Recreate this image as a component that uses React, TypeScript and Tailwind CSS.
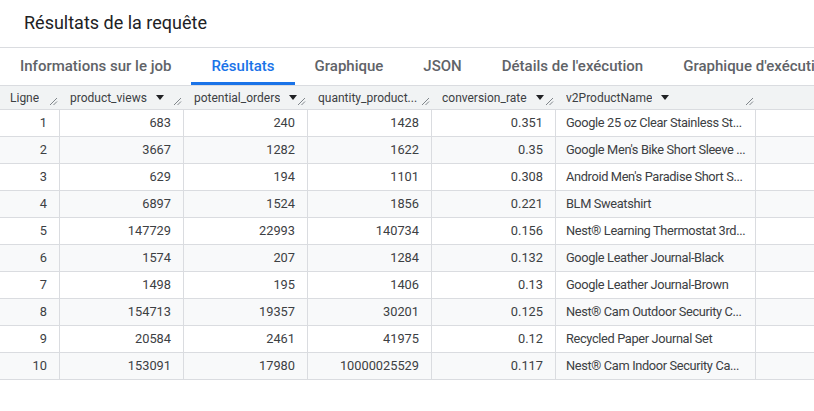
import React from "react";

interface Row {
  views: number;
  orders: number;
  qty: number;
  rate: string;
  name: string;
}

const rows: Row[] = [
  { views: 683, orders: 240, qty: 1428, rate: "0.351", name: "Google 25 oz Clear Stainless St..." },
  { views: 3667, orders: 1282, qty: 1622, rate: "0.35", name: "Google Men's Bike Short Sleeve ..." },
  { views: 629, orders: 194, qty: 1101, rate: "0.308", name: "Android Men's Paradise Short S..." },
  { views: 6897, orders: 1524, qty: 1856, rate: "0.221", name: "BLM Sweatshirt" },
  { views: 147729, orders: 22993, qty: 140734, rate: "0.156", name: "Nest® Learning Thermostat 3rd..." },
  { views: 1574, orders: 207, qty: 1284, rate: "0.132", name: "Google Leather Journal-Black" },
  { views: 1498, orders: 195, qty: 1406, rate: "0.13", name: "Google Leather Journal-Brown" },
  { views: 154713, orders: 19357, qty: 30201, rate: "0.125", name: "Nest® Cam Outdoor Security C..." },
  { views: 20584, orders: 2461, qty: 41975, rate: "0.12", name: "Recycled Paper Journal Set" },
  { views: 153091, orders: 17980, qty: 10000025529, rate: "0.117", name: "Nest® Cam Indoor Security Ca..." },
];

const tabs = [
  "Informations sur le job",
  "Résultats",
  "Graphique",
  "JSON",
  "Détails de l'exécution",
  "Graphique d'exécution",
];

// little "//" resize grip at the bottom right of header cells
function Grip() {
  return (
    <svg width="9" height="9" viewBox="0 0 9 9" className="absolute right-[2px] bottom-[3px]">
      <line x1="1" y1="8" x2="8" y2="1" stroke="#80868b" strokeWidth="1" />
      <line x1="4.5" y1="8" x2="8" y2="4.5" stroke="#80868b" strokeWidth="1" />
    </svg>
  );
}

function SortArrow() {
  return (
    <svg width="8" height="5" viewBox="0 0 8 5" className="ml-[9px] shrink-0">
      <path d="M0 0h8L4 5z" fill="#202124" />
    </svg>
  );
}

function HeaderCell({ label, width, sort }: { label: string; width: string; sort?: boolean }) {
  return (
    <div className={`relative flex items-center h-full pl-[10px] pr-[8px] whitespace-nowrap ${width}`}>
      <span className="overflow-hidden">{label}</span>
      {sort && <SortArrow />}
      <Grip />
    </div>
  );
}

export default function App() {
  return (
    <div className="w-[814px] h-[411px] overflow-hidden bg-white" style={{ fontFamily: "Roboto, 'Liberation Sans', sans-serif" }}>
      <div className="h-[48px] flex items-center pl-[24px] pb-[2px] text-[18px] text-[#202124] border-b border-[#dadce0]">
        Résultats de la requête
      </div>

      <div className="flex h-[37px] whitespace-nowrap text-[15px] font-medium">
        {tabs.map((t, i) => (
          <div
            key={t}
            className={`flex items-center px-[20px] pt-[2px] border-b-[3px] ${
              i === 1 ? "text-[#1a73e8] border-[#1a73e8]" : "text-[#5f6368] border-transparent"
            }`}
          >
            {t}
          </div>
        ))}
      </div>

      <div className="text-[12.8px] text-[#3c4043]">
        <div className="flex h-[25px] bg-[#f1f3f4] border-y border-[#dadce0] text-[12px] text-[#3c4043]">
          <HeaderCell label="Ligne" width="w-[60px]" />
          <HeaderCell label="product_views" width="w-[124px]" sort />
          <HeaderCell label="potential_orders" width="w-[124px]" sort />
          <HeaderCell label="quantity_product..." width="w-[124px]" />
          <HeaderCell label="conversion_rate" width="w-[124px]" sort />
          <HeaderCell label="v2ProductName" width="w-[200px]" sort />
        </div>

        {rows.map((r, i) => (
          <div
            key={i}
            className={`flex h-[27px] border-b border-[#dadce0] ${i % 2 === 1 ? "bg-[#f8f9fa]" : "bg-white"}`}
          >
            <div className="w-[60px] flex items-center justify-end pr-[12px] border-r border-[#dadce0]">{i + 1}</div>
            <div className="w-[124px] flex items-center justify-end pr-[12px] border-r border-[#dadce0]">{r.views}</div>
            <div className="w-[124px] flex items-center justify-end pr-[12px] border-r border-[#dadce0]">{r.orders}</div>
            <div className="w-[124px] flex items-center justify-end pr-[12px] border-r border-[#dadce0]">{r.qty}</div>
            <div className="w-[124px] flex items-center justify-end pr-[12px] border-r border-[#dadce0]">{r.rate}</div>
            <div className="w-[200px] flex items-center pl-[10px] border-r border-[#dadce0] whitespace-nowrap overflow-hidden tracking-[-0.35px]">
              {r.name}
            </div>
          </div>
        ))}
      </div>
    </div>
  );
}
